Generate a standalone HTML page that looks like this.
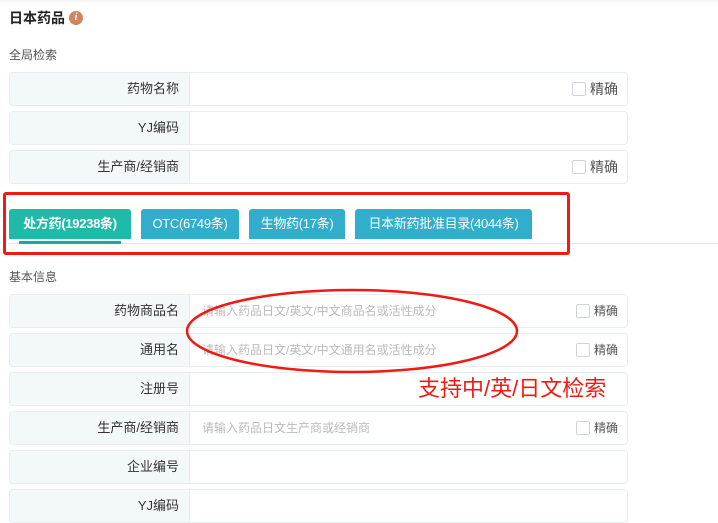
<!DOCTYPE html>
<html><head><meta charset="utf-8"><style>
*{margin:0;padding:0;box-sizing:border-box}
body{width:718px;height:512px;overflow:hidden;background:#fff;font-family:"Liberation Sans","Noto Sans CJK SC",sans-serif;position:relative;color:#333}
.abs{position:absolute}
.row{position:absolute;left:9px;width:619px;height:34px;border:1px solid #e8eef0;border-radius:4px;overflow:hidden;background:#fff}
.lab{position:absolute;left:0;top:0;bottom:0;width:180px;background:#f3f8f8;border-right:1px solid #e8eef0;text-align:right;padding-right:10px;line-height:32px;font-size:13px;color:#333}
.ph{position:absolute;left:192px;top:0;line-height:32px;font-size:12px;color:#bbb}
.ck{position:absolute;top:9px;width:14px;height:14px;border:1px solid #d0d4da;border-radius:2px;background:#fff}
.ckl{position:absolute;top:0;line-height:32px;color:#555}
.tab{position:absolute;top:209px;height:30px;line-height:29px;color:#fff;font-size:13px;text-align:center;border-radius:3px 3px 0 0;background:#31aecb;letter-spacing:-0.3px}
</style></head><body>
<div class="abs" style="left:0;top:0;width:718px;height:2px;background:#f4f4f4"></div>
<div class="abs" style="left:9px;top:8px;font-size:14px;font-weight:bold;color:#222">日本药品</div>
<div class="abs" style="left:69px;top:11px;width:14px;height:14px;border-radius:50%;background:#d0845f;color:#fff;font-size:10px;font-style:italic;font-weight:bold;text-align:center;line-height:14px;font-family:'Liberation Serif',serif">i</div>
<div class="abs" style="left:9px;top:46px;font-size:12px;color:#555">全局检索</div>

<div class="row" style="top:72px"><div class="lab">药物名称</div><div class="ck" style="left:562px"></div><div class="ckl" style="left:580px;font-size:14px">精确</div></div>
<div class="row" style="top:111px"><div class="lab">YJ编码</div></div>
<div class="row" style="top:150px"><div class="lab">生产商/经销商</div><div class="ck" style="left:562px"></div><div class="ckl" style="left:580px;font-size:14px">精确</div></div>

<div class="tab" style="left:9px;width:122px;background:#20bba8;font-weight:bold">处方药(19238条)</div>
<div class="tab" style="left:141px;width:98px">OTC(6749条)</div>
<div class="tab" style="left:249px;width:96px">生物药(17条)</div>
<div class="tab" style="left:355px;width:177px">日本新药批准目录(4044条)</div>
<div class="abs" style="left:9px;top:243px;width:709px;height:1px;background:#e4e7ea"></div>
<div class="abs" style="left:19px;top:241px;width:102px;height:3px;background:#14ad9b"></div>
<div class="abs" style="left:3px;top:192px;width:567px;height:63px;border:3px solid #f11a12;border-radius:3px"></div>

<div class="abs" style="left:9px;top:268px;font-size:12px;color:#555">基本信息</div>
<div class="row" style="top:294px"><div class="lab">药物商品名</div><div class="ph">请输入药品日文/英文/中文商品名或活性成分</div><div class="ck" style="left:566px"></div><div class="ckl" style="left:584px;font-size:12px">精确</div></div>
<div class="row" style="top:333px"><div class="lab">通用名</div><div class="ph">请输入药品日文/英文/中文通用名或活性成分</div><div class="ck" style="left:566px"></div><div class="ckl" style="left:584px;font-size:12px">精确</div></div>
<div class="row" style="top:372px"><div class="lab">注册号</div></div>
<div class="row" style="top:411px"><div class="lab">生产商/经销商</div><div class="ph">请输入药品日文生产商或经销商</div><div class="ck" style="left:566px"></div><div class="ckl" style="left:584px;font-size:12px">精确</div></div>
<div class="row" style="top:450px"><div class="lab">企业编号</div></div>
<div class="row" style="top:489px"><div class="lab">YJ编码</div></div>

<svg class="abs" style="left:0;top:0" width="718" height="512"><ellipse cx="352" cy="331" rx="165" ry="41" fill="none" stroke="#f11a12" stroke-width="2.5"/></svg>
<div class="abs" style="left:418px;top:371px;font-size:22px;color:#f11a12;white-space:nowrap">支持中/英/日文检索</div>
</body></html>
